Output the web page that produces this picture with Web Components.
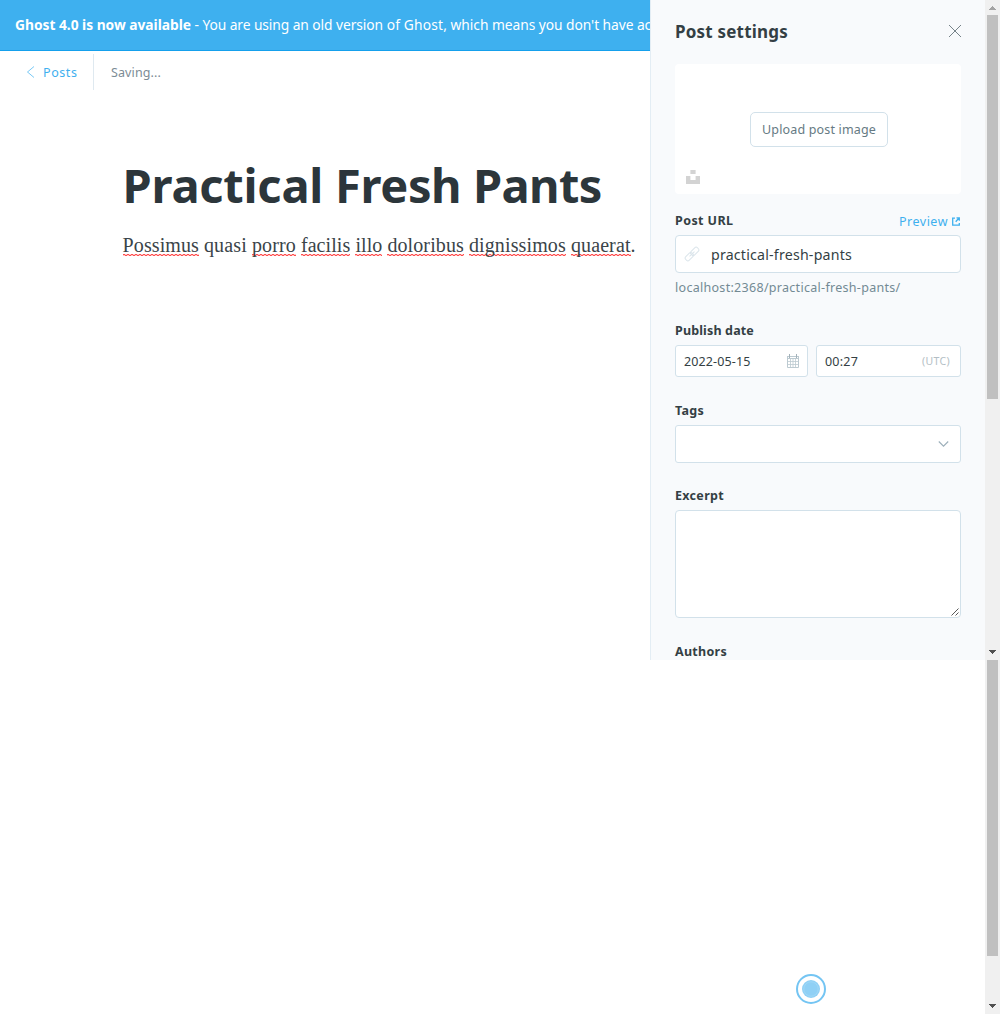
<!DOCTYPE html>
<html lang="en">
<head>
<meta charset="utf-8">
<title>Post settings</title>
<style>
body{margin:0;background:#fff;font-family:"Noto Sans","Open Sans",sans-serif;color:#343f44}
</style>
</head>
<body>
<editor-app></editor-app>
<script>
// Inline text run whose tracking is adjusted so it occupies the given width.
class FitText extends HTMLElement{
  connectedCallback(){
    if(!this.shadowRoot)this.attachShadow({mode:'open'}).innerHTML='<style>:host{display:inline-block;white-space:pre}</style><slot></slot>';
    const w=parseFloat(this.getAttribute('w'));
    if(!w)return;
    this.style.letterSpacing='0px';
    const n=this.textContent.length,nat=this.getBoundingClientRect().width;
    this.style.letterSpacing=((w-nat)/n)+'px';
  }
}
class ScrollRail extends HTMLElement{
  connectedCallback(){
    const up=this.hasAttribute('up'),t=this.getAttribute('thumb');
    this.attachShadow({mode:'open'}).innerHTML=`<style>
    :host{display:flex;flex-direction:column;align-items:center;width:15px;background:#f0f0f0}
    svg{display:block;flex:none}.t{width:11px;height:${t}px;background:#c0c0c0;flex:none}.s{flex:1}</style>
    ${up?'<svg width="15" height="15"><path d="M4 10h7v-1h-1v-1h-1v-1H8V6H7v1H6v1H5v1H4z" fill="#a3a3a3"/></svg>':''}
    <div class="t"></div><div class="s"></div>
    <svg width="15" height="15"><path d="M4 5h7v1h-1v1H9v1H8v1H7V8H6V7H5V6H4z" fill="#505050"/></svg>`;
  }
}
class TopBanner extends HTMLElement{
  connectedCallback(){
    this.attachShadow({mode:'open'}).innerHTML=`<style>
    :host{display:block;box-sizing:border-box;height:51px;padding-left:15px;background:#3eb0ef;border-bottom:1px solid #15a0ec;color:#fff;font-size:13.8px;line-height:50px;white-space:nowrap;overflow:hidden}
    b{font-weight:700}</style><b><fit-text w="176">Ghost 4.0 is now available</fit-text></b><fit-text w="192"> - You are using an old version</fit-text><fit-text w="64"> of Ghost,</fit-text><fit-text w="190"> which means you don't have </fit-text><fit-text w="14">ac</fit-text>`;
  }
}
class EditorNav extends HTMLElement{
  connectedCallback(){
    this.attachShadow({mode:'open'}).innerHTML=`<style>
    :host{display:flex;height:36px;margin-top:3px;font-size:12.5px;line-height:36px}
    .b{display:flex;align-items:center;box-sizing:border-box;width:94px;padding-left:26px;border-right:1px solid #dfe9f0;color:#3eb0ef}
    fit-text{margin-top:1px}
    svg{margin-right:8px}.s{color:#7c8b95;padding-left:17px}</style>
    <div class="b"><svg width="9" height="12" fill="none" stroke="#3eb0ef" stroke-width=".7"><path d="M8 .5 1.5 6 8 11.5"/></svg><fit-text w="34.5">Posts</fit-text></div>
    <div class="s"><fit-text w="50">Saving...</fit-text></div>`;
  }
}
class PostBody extends HTMLElement{
  connectedCallback(){
    const words=[['Possimus',76.3,1],['quasi',43,0],['porro',44,1],['facilis',49.5,1],['illo',27,1],['doloribus',76.5,1],['dignissimos',97,1],['quaerat',59.7,1]];
    this.attachShadow({mode:'open'}).innerHTML=`<style>
    :host{display:block;padding:65px 0 0 122.6px}
    h1{margin:0;font-size:47px;line-height:60px;font-weight:700;color:#2c363b;white-space:nowrap}
    p{margin:15px 0 0;font:20px/30px "Liberation Serif",serif;color:#3a4449;white-space:nowrap}
    .e{background:repeating-linear-gradient(90deg,#ff4d4d 0 2px,#ffc4c4 2px 4px) 0 24px/100% 1px no-repeat,
      repeating-linear-gradient(90deg,#ffc4c4 0 2px,#ff4d4d 2px 4px) 0 25px/100% 1px no-repeat}</style>
    <h1><fit-text w="212.5">Practical </fit-text><fit-text w="138">Fresh </fit-text><fit-text w="128.500">Pants</fit-text></h1>
    <p>${words.map(([t,w,e])=>`<fit-text w="${w}"${e?' class="e"':''}>${t}</fit-text>`).join(' ')}.</p>`;
  }
}
class FormField extends HTMLElement{
  connectedCallback(){
    this.attachShadow({mode:'open'}).innerHTML=`<style>
    :host{display:block}.h{display:flex;justify-content:space-between;height:20px;line-height:20px;margin-bottom:5px;font-size:12.5px}
    b{font-weight:700;color:#343f44;padding-top:1px}</style>
    <div class="h"><b><fit-text w="${this.getAttribute('w')}">${this.getAttribute('label')}</fit-text></b><slot name="action"></slot></div><slot></slot>`;
  }
}
class InputBox extends HTMLElement{
  connectedCallback(){
    this.attachShadow({mode:'open'}).innerHTML=`<style>
    :host{display:flex;align-items:center;box-sizing:border-box;background:#fff;border:1px solid #d2e1ea;border-radius:4px}</style><slot></slot>`;
  }
}
class SettingsPanel extends HTMLElement{
  connectedCallback(){
    this.attachShadow({mode:'open'}).innerHTML=`<style>
    :host{display:block;box-sizing:border-box;width:335px;height:660px;overflow:hidden;background:#f8fafc;border-left:1px solid #e3edf4;padding:0 24px}
    .head{display:flex;align-items:center;justify-content:space-between;height:64px;box-sizing:border-box;padding-bottom:2px}
    h4{margin:1px 0 0;font-size:17px;line-height:25px;font-weight:700}
    .up{display:flex;flex-direction:column;align-items:center;box-sizing:border-box;height:130px;padding-top:48px;background:#fff;border-radius:4px}
    .btn{box-sizing:border-box;width:138px;height:35px;margin-left:2px;border:1px solid #d2e1ea;border-radius:5px;line-height:33px;font-size:12.5px;text-align:center;color:#667a83}
    .un{align-self:flex-start;margin:23px 0 0 11px}
    svg{display:block;flex:none}.btn fit-text{vertical-align:top}
    a{display:flex;align-items:center;color:#3eb0ef;height:23px}
    .url{height:38px;padding-left:8px;font-size:14.2px}
    .hint{font-size:12.5px;line-height:20px;margin-top:5px;color:#738a94}
    .row{display:flex;gap:8px}.row input-box{height:32px;font-size:12.5px;padding:0 8px;justify-content:space-between;border-radius:3px}
    .utc{font-size:10.5px;color:#b3bec5;margin-right:2px}
    .tags{height:38px;padding-right:11px;justify-content:flex-end;border-radius:3px}
    .ta{height:108px;align-items:flex-end;justify-content:flex-end;padding:1px}
    form-field{height:0}</style>
    <div class="head"><h4><fit-text w="113">Post settings</fit-text></h4><svg width="12" height="12" stroke="#66757c" fill="none"><path d="m0 0 12 12M12 0 0 12" stroke-width=".9"/></svg></div>
    <div class="up"><div class="btn"><fit-text w="114">Upload post image</fit-text></div>
      <svg class="un" width="14" height="14" fill="#d3d3d3"><path d="M4.4 0h5.2v4H4.4zM0 6h4.4v4h5.2V6H14v8H0z"/></svg></div>
    <form-field label="Post URL" w="58.5" style="height:110px;margin-top:16px">
      <a slot="action"><fit-text w="49">Preview</fit-text><svg style="margin:0 1px 1px 4px" width="8" height="9" viewBox="0 0 8 9" fill="none" stroke="#3eb0ef" stroke-width="1.3"><path d="M3 1.2H.7v7h6.6V6M4.5.8h2.8v2.9M7 1 3.7 4.8"/></svg></a>
      <input-box class="url"><svg width="16" height="16" viewBox="0 0 16 16" fill="none" stroke="#dbe5eb" stroke-width="1"><g transform="rotate(-45 8 8)"><rect x="-.3" y="5.5" width="9" height="5" rx="2"/><rect x="7.3" y="5.5" width="9" height="5" rx="2"/><path d="M4.5 8h7"/></g></svg><fit-text w="141" style="margin-left:11px">practical-fresh-pants</fit-text></input-box>
      <div class="hint"><fit-text w="225.5">localhost:2368/practical-fresh-pants/</fit-text></div>
    </form-field>
    <form-field label="Publish date" w="79" style="height:80px">
      <div class="row"><input-box style="width:133px"><fit-text w="66.5">2022-05-15</fit-text><svg width="12" height="14" fill="none" stroke="#bccad1" stroke-width="1"><path d="M.5 2v11.5h11V2M0 2.5h12M0 4.500h12"/><path d="M2.5 0v4M9.5 0v4" stroke="#a3b1b9"/><path d="M3.5 5v8M6 5v8M8.5 5v8M1 7.5h10M1 10.5h10" stroke-width=".8"/></svg></input-box>
      <input-box style="width:145px"><fit-text w="33">00:27</fit-text><fit-text class="utc" w="28">(UTC)</fit-text></input-box></div>
    </form-field>
    <form-field label="Tags" w="29" style="height:85px"><input-box class="tags"><svg width="11" height="6" fill="none" stroke="#9cafba" stroke-width="1.1"><path d="m.8.5 4.7 4.7 4.7-4.7"/></svg></input-box></form-field>
    <form-field label="Excerpt" w="49" style="height:156px"><input-box class="ta"><svg width="8" height="8" stroke="#444" stroke-width=".9" fill="none"><path d="M.5 7.5l7-7M4.5 7.5l3-3"/></svg></input-box></form-field>
    <form-field label="Authors" w="52"></form-field>`;
  }
}
class SaveIndicator extends HTMLElement{
  connectedCallback(){
    this.attachShadow({mode:'open'}).innerHTML=`<style>:host{display:flex;align-items:flex-end;justify-content:flex-end;box-sizing:border-box;padding:0 159px 10px 0}</style>
    <svg width="30" height="30"><circle cx="15" cy="15" r="14" fill="#fff" stroke="#74c5f3" stroke-width="2"/><circle cx="15" cy="15" r="9" fill="#8fd0f5"/><circle cx="15" cy="15" r="7.2" fill="none" stroke="#a5daf7" stroke-width=".7"/></svg>`;
  }
}
class EditorApp extends HTMLElement{
  connectedCallback(){
    this.attachShadow({mode:'open'}).innerHTML=`<style>
    :host{display:grid;grid-template:660px 354px / 650px 335px 15px;width:1000px;height:1014px;overflow:hidden}
    main{overflow:hidden}save-indicator{grid-column:1/3}</style>
    <main><top-banner></top-banner><editor-nav></editor-nav><post-body></post-body></main>
    <settings-panel></settings-panel><scroll-rail up thumb="384"></scroll-rail>
    <save-indicator></save-indicator><scroll-rail thumb="296"></scroll-rail>`;
  }
}
customElements.define('fit-text',FitText);
customElements.define('scroll-rail',ScrollRail);
customElements.define('top-banner',TopBanner);
customElements.define('editor-nav',EditorNav);
customElements.define('post-body',PostBody);
customElements.define('form-field',FormField);
customElements.define('input-box',InputBox);
customElements.define('settings-panel',SettingsPanel);
customElements.define('save-indicator',SaveIndicator);
customElements.define('editor-app',EditorApp);
</script>
</body>
</html>
